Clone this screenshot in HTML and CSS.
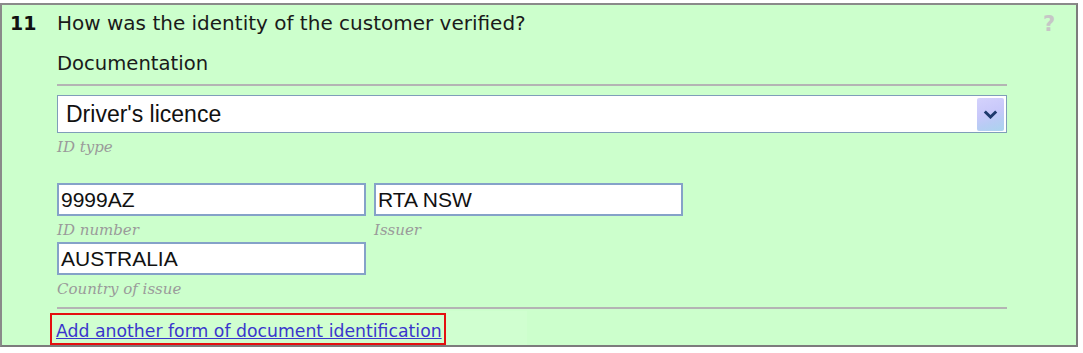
FILE: index.html
```html
<!DOCTYPE html>
<html>
<head>
<meta charset="utf-8">
<link rel="stylesheet" href="styles.css">
</head>
<body>
<div class="panel">
  <div class="num">11</div>
  <div class="content">
    <div class="question">How was the identity of the customer verified?</div>
    <div class="section">Documentation</div>
    <div class="rule"></div>
    <div class="select">
      <span class="select-text">Driver's licence</span>
      <span class="select-btn"><svg width="15" height="9" viewBox="0 0 15 9"><path d="M1.8 1.5 L7.5 7 L13.2 1.5" fill="none" stroke="#1e3a6c" stroke-width="3"/></svg></span>
    </div>
    <div class="label label-type">ID type</div>
    <div class="fields">
      <div class="field">
        <div class="input">9999AZ</div>
        <div class="label">ID number</div>
      </div>
      <div class="field">
        <div class="input">RTA NSW</div>
        <div class="label">Issuer</div>
      </div>
    </div>
    <div class="field field-country">
      <div class="input">AUSTRALIA</div>
      <div class="label">Country of issue</div>
    </div>
    <div class="rule rule-bottom"></div>
    <div class="link-row">
      <a class="add-link" href="#">Add another form of document identification</a>
    </div>
  </div>
  <div class="help">?</div>
</div>
</body>
</html>
```
FILE: styles.css
```css
html, body {
  margin: 0;
  padding: 0;
  background: #ffffff;
}
body {
  padding-top: 3px;
}
.panel {
  box-sizing: border-box;
  width: 1078px;
  height: 344px;
  border: 2px solid #8a8a8a;
  border-right-color: #7c7c7c;
  border-bottom-color: #7c7c7c;
  background: #ccffcc;
  display: grid;
  grid-template-columns: 55px 950px 1fr;
  font-family: "DejaVu Sans", Verdana, sans-serif;
  color: #1a1a1a;
  overflow: hidden;
}
.num {
  font-weight: bold;
  font-size: 19px;
  line-height: 24px;
  padding: 6px 0 0 8px;
  color: #111;
}
.content {
  display: flex;
  flex-direction: column;
  padding-top: 6px;
}
.question {
  font-size: 20px;
  line-height: 24px;
}
.section {
  margin-top: 17px;
  font-size: 19.6px;
  line-height: 24px;
}
.rule {
  margin-top: 8px;
  height: 2px;
  background: #b4b4b4;
}
.select {
  box-sizing: border-box;
  margin-top: 9px;
  height: 38px;
  border: 1px solid #7f9db9;
  background: #fff;
  display: flex;
  align-items: center;
  justify-content: space-between;
  padding: 0 2px 0 8px;
}
.select-text {
  font-family: "Liberation Sans", Arial, sans-serif;
  font-size: 23px;
  line-height: 36px;
  color: #111;
}
.select-btn {
  width: 27px;
  height: 33px;
  border-radius: 2px;
  background: linear-gradient(160deg, #d4d2fc 0%, #c8c8fa 45%, #b8ccf4 70%, #aad4ee 100%);
  display: flex;
  align-items: center;
  justify-content: center;
}
.label {
  font-family: "DejaVu Serif", Georgia, serif;
  font-style: italic;
  font-size: 15px;
  color: #9a9a9a;
  line-height: 18px;
  margin-top: 5px;
}
.fields {
  display: flex;
  gap: 8px;
  margin-top: 27px;
}
.field {
  display: flex;
  flex-direction: column;
}
.field-country {
  margin-top: 3px;
}
.input {
  box-sizing: border-box;
  width: 309px;
  height: 33px;
  border: 2px solid #85a2c8;
  background: #fff;
  font-family: "Liberation Sans", Arial, sans-serif;
  font-size: 21px;
  line-height: 29px;
  padding-left: 2px;
  color: #111;
}
.rule-bottom {
  margin-top: 9px;
}
.link-row {
  margin-top: 2px;
  margin-left: -7px;
  width: 477px;
  padding-top: 2px;
  background: #d0ffd0;
  flex: 1;
}
.add-link {
  display: inline-block;
  border: 2px solid #e41010;
  padding: 5px 2px 0 4px;
  font-size: 17.3px;
  line-height: 23px;
  color: #3a36cc;
  text-decoration: underline;
}
.help {
  font-weight: bold;
  font-size: 21px;
  line-height: 24px;
  color: #c6c6c6;
  padding: 7px 0 0 36px;
}
```
